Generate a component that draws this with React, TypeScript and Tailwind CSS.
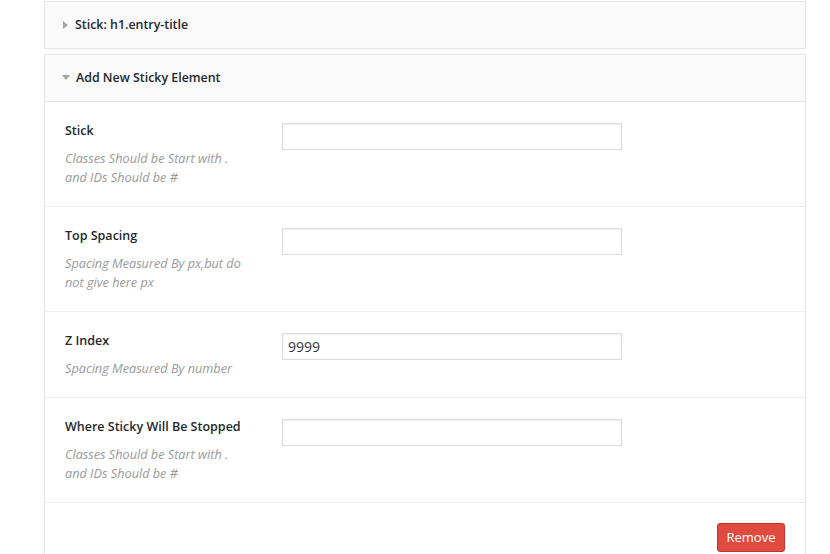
import React from 'react';

type Field = {
  label: string;
  desc: string[];
  value?: string;
};

const fields: Field[] = [
  { label: 'Stick', desc: ['Classes Should be Start with .', 'and IDs Should be #'] },
  { label: 'Top Spacing', desc: ['Spacing Measured By px,but do', 'not give here px'] },
  { label: 'Z Index', desc: ['Spacing Measured By number'], value: '9999' },
  { label: 'Where Sticky Will Be Stopped', desc: ['Classes Should be Start with .', 'and IDs Should be #'] },
];

function Caret({ open }: { open?: boolean }) {
  return open ? (
    <svg width="8" height="6" viewBox="0 0 8 6" className="shrink-0">
      <path d="M0 0 L8 0 L4 5 Z" fill="#a0a5aa" />
    </svg>
  ) : (
    <svg width="6" height="8" viewBox="0 0 6 8" className="shrink-0">
      <path d="M0 0 L5 4 L0 8 Z" fill="#a0a5aa" />
    </svg>
  );
}

function FieldRow({ field }: { field: Field }) {
  return (
    <div className="flex border-b border-[#eeeeee] pt-[19px] pb-[19px] pl-5">
      <div className="w-[217px] shrink-0">
        <div className="text-[12.5px] leading-5 font-semibold text-[#23282d]">{field.label}</div>
        <div className="mt-2 text-[12.7px] leading-[19px] italic text-[#999999]">
          {field.desc.map((line) => (
            <div key={line}>{line}</div>
          ))}
        </div>
      </div>
      <div className="pt-[2px]">
        <input
          type="text"
          defaultValue={field.value}
          className="w-[340px] h-[27px] border border-[#dddddd] bg-white px-[5px] text-[14px] text-[#32373c] shadow-[inset_0_1px_2px_rgba(0,0,0,0.07)] outline-none"
        />
      </div>
    </div>
  );
}

export default function App() {
  return (
    <div className="h-[554px] overflow-hidden bg-white font-['Open_Sans',sans-serif]">
      <div className="ml-[44px] w-[762px] pt-px">
        <div className="flex h-[48px] items-center gap-[6px] border border-[#e5e5e5] bg-[#fafafa] pl-[18px] text-[12.4px] font-semibold text-[#23282d]">
          <Caret />
          <span>Stick: h1.entry-title</span>
        </div>

        <div className="mt-[5px] border border-[#e5e5e5]">
          <div className="flex h-[47px] items-center gap-[6px] border-b border-[#e5e5e5] bg-[#fafafa] pl-[17px] text-[12.4px] font-semibold text-[#23282d]">
            <Caret open />
            <span>Add New Sticky Element</span>
          </div>
          {fields.map((f) => (
            <FieldRow key={f.label} field={f} />
          ))}
          <div className="flex justify-end pt-5 pr-5 pb-5">
            <button className="h-[29px] w-[68px] rounded-[3px] border border-[#c9302c] bg-[#e04b3f] text-[13px] text-white">
              Remove
            </button>
          </div>
        </div>
      </div>
    </div>
  );
}
